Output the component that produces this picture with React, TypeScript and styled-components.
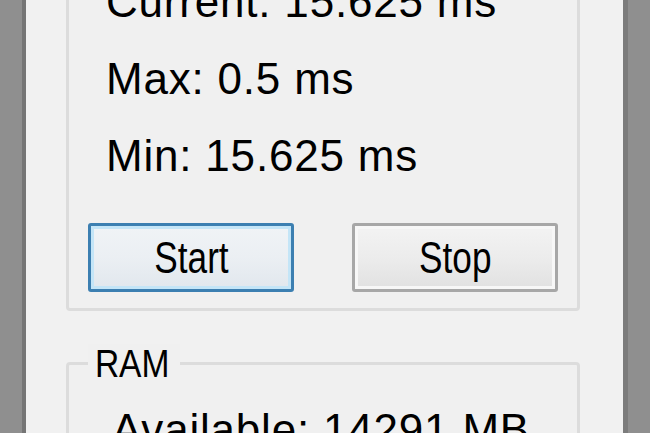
import React from "react";
import styled, { createGlobalStyle } from "styled-components";

const GlobalStyle = createGlobalStyle`
  html, body {
    margin: 0;
    padding: 0;
    height: 100%;
    overflow: hidden;
    background: #f0f0f0;
  }
  #root { height: 100%; }
`;

const Window = styled.div`
  display: flex;
  width: 650px;
  height: 433px;
  overflow: hidden;
  background: #f0f0f0;
  font-family: "Liberation Sans", Arial, sans-serif;
  color: #000;
`;

const Frame = styled.div<{ $side: "left" | "right" }>`
  flex: none;
  width: 22px;
  background: #8f8f8f;
  ${(p) =>
    p.$side === "left"
      ? "border-right: 4px solid #757575;"
      : "border-left: 5px solid #7c7c7c;"}
`;

const Client = styled.div`
  flex: 1;
  display: flex;
  flex-direction: column;
  padding: 0 43px 0 40px;
  background: #f1f1f1;
  min-width: 0;
`;

const GroupBox = styled.div<{ $cutTop?: boolean }>`
  position: relative;
  display: flex;
  flex-direction: column;
  border: 3px solid #dcdcdc;
  border-radius: 4px;
  background: #f0f0f0;
  padding: ${(p) => (p.$cutTop ? "17px 19px 16px" : "26px 19px 40px")};
  margin-top: ${(p) => (p.$cutTop ? "-57px" : "51px")};
`;

/* caption that sits over the group box's top border */
const Legend = styled.div`
  position: absolute;
  left: 19px;
  top: -21px;
  padding: 0 12px 0 8px;
  background: #f0f0f0;
  font-size: 39px;
  line-height: 40px;
  white-space: nowrap;
  transform: scaleX(0.86);
  transform-origin: left center;
`;

const StatLine = styled.div<{ $indent: number }>`
  font-size: 44px;
  line-height: 77px;
  letter-spacing: 0.8px;
  white-space: nowrap;
  padding-left: ${(p) => p.$indent}px;
`;

const ButtonRow = styled.div`
  display: flex;
  justify-content: space-between;
  margin-top: 29px;
`;

const Button = styled.button<{ $focused?: boolean }>`
  width: 206px;
  height: 69px;
  display: flex;
  align-items: center;
  justify-content: center;
  padding: 0;
  border-radius: 3px;
  font-family: "Liberation Sans", Arial, sans-serif;
  font-size: 44px;
  line-height: 1;
  color: #000;
  cursor: default;
  border: 3px solid ${(p) => (p.$focused ? "#3c7fb1" : "#a7a7a7")};
  box-shadow: inset 0 0 0 3px ${(p) => (p.$focused ? "#c4e5f7" : "#f7f7f7")};
  background: ${(p) =>
    p.$focused
      ? "linear-gradient(#f0f3f6 0%, #ebeff3 50%, #e1e7ed 100%)"
      : "linear-gradient(#f3f3f3 0%, #ececec 50%, #e1e1e1 100%)"};
`;

/* the dialog font is narrower than Arial: condense the caption */
const ButtonCaption = styled.span`
  display: inline-block;
  transform: scaleX(0.8);
`;

export default function App() {
  return (
    <>
      <GlobalStyle />
      <Window>
        <Frame $side="left" />
        <Client>
          <GroupBox $cutTop>
            <StatLine $indent={18}>Current: 15.625 ms</StatLine>
            <StatLine $indent={18}>Max: 0.5 ms</StatLine>
            <StatLine $indent={18}>Min: 15.625 ms</StatLine>
            <ButtonRow>
              <Button $focused>
                <ButtonCaption>Start</ButtonCaption>
              </Button>
              <Button>
                <ButtonCaption>Stop</ButtonCaption>
              </Button>
            </ButtonRow>
          </GroupBox>
          <GroupBox>
            <Legend>RAM</Legend>
            <StatLine $indent={24}>Available: 14291 MB</StatLine>
          </GroupBox>
        </Client>
        <Frame $side="right" />
      </Window>
    </>
  );
}
